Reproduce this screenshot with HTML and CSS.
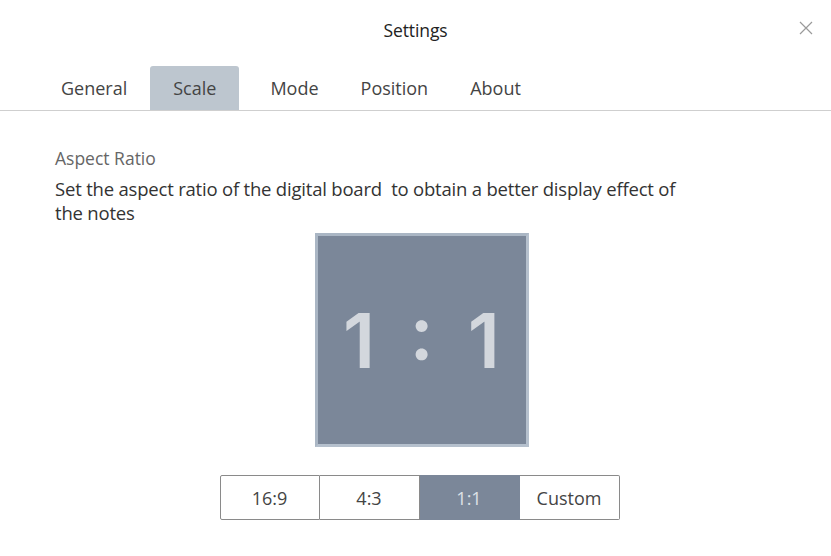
FILE: index.html
```
<!DOCTYPE html>
<html>
<head>
  <title>Settings</title>
  <link rel="stylesheet" href="styles.css">
</head>
<body>
  <div class="dialog">
    <div class="header">
      <h1 class="title">Settings</h1>
      <span class="close">
        <svg width="14" height="14" viewBox="0 0 14 14"><path d="M1 1L13 13M13 1L1 13" stroke="#9a9a9a" stroke-width="1.2" fill="none"/></svg>
      </span>
    </div>

    <ul class="tabs">
      <li class="tab">General</li>
      <li class="tab active">Scale</li>
      <li class="tab">Mode</li>
      <li class="tab">Position</li>
      <li class="tab">About</li>
    </ul>

    <div class="content">
      <div class="label">Aspect Ratio</div>
      <p class="desc">Set the aspect ratio of the digital board&nbsp; to obtain a better display effect of the notes</p>

      <div class="preview">
        <div class="board">1 : 1</div>
      </div>

      <div class="ratios">
        <button class="ratio">16:9</button>
        <button class="ratio">4:3</button>
        <button class="ratio selected">1:1</button>
        <button class="ratio">Custom</button>
      </div>
    </div>
  </div>
</body>
</html>
```

FILE: styles.css
```
body {
  margin: 0;
  padding: 0;
  background: #fff;
  font-family: "Open Sans", "Noto Sans", sans-serif;
  color: #333;
}

.dialog {
  width: 831px;
  height: 556px;
}

.header {
  position: relative;
  height: 60px;
  display: flex;
  align-items: center;
  justify-content: center;
}

.title {
  margin: 0;
  font-size: 17.5px;
  font-weight: normal;
  color: #222;
  letter-spacing: -0.1px;
}

.close {
  position: absolute;
  right: 18px;
  top: 21px;
  line-height: 0;
}

.tabs {
  list-style-type: none;
  margin: 6px 0 0 0;
  padding: 0 0 0 41px;
  display: flex;
  border-bottom: 1px solid #cfcfcf;
  height: 44px;
}

.tab {
  font-size: 18px;
  color: #444;
  padding: 0 20px;
  line-height: 44px;
  letter-spacing: 0;
}

.tab:nth-child(4) {
  margin-left: 2px;
}

.tab:nth-child(5) {
  margin-left: 2px;
}

.tab.active {
  background: #bdc6cf;
  border-radius: 3px 3px 0 0;
  padding: 0 23px;
  margin: 0 11px 0 3px;
}

.content {
  padding: 36px 0 0 55px;
}

.label {
  font-size: 17.5px;
  color: #666;
  letter-spacing: 0;
  line-height: 22px;
}

.desc {
  margin: 8px 0 0 0;
  width: 640px;
  font-size: 18.5px;
  line-height: 24px;
  color: #333;
  letter-spacing: -0.2px;
}

.preview {
  display: flex;
  justify-content: center;
  margin: 8px 0 0 -43px;
}

.board {
  width: 208px;
  height: 208px;
  background: #7b8799;
  border: 3px solid #b5c0cd;
  border-top-color: #aab6c4;
  border-left-color: #aab6c4;
  display: flex;
  align-items: center;
  justify-content: center;
  box-sizing: content-box;
  padding-bottom: 0;
  font-family: "Inter", "Open Sans", sans-serif;
  font-size: 76px;
  font-weight: 600;
  color: #d3d7dd;
  word-spacing: 15px;
  line-height: 1;
}

.ratios {
  display: flex;
  justify-content: center;
  margin: 28px 0 0 -47px;
}

.ratio {
  width: 100px;
  height: 45px;
  background: #fff;
  border: 1px solid #8a8a8a;
  border-left: none;
  font-family: "Open Sans", "Noto Sans", sans-serif;
  font-size: 18px;
  color: #444;
  padding: 0;
}

.ratio:first-child {
  border-left: 1px solid #8a8a8a;
  border-radius: 2px 0 0 2px;
}

.ratio:last-child {
  border-radius: 0 2px 2px 0;
}

.ratio.selected {
  background: #7b8799;
  color: #dde1e6;
  border-color: #7b8799;
}
```
